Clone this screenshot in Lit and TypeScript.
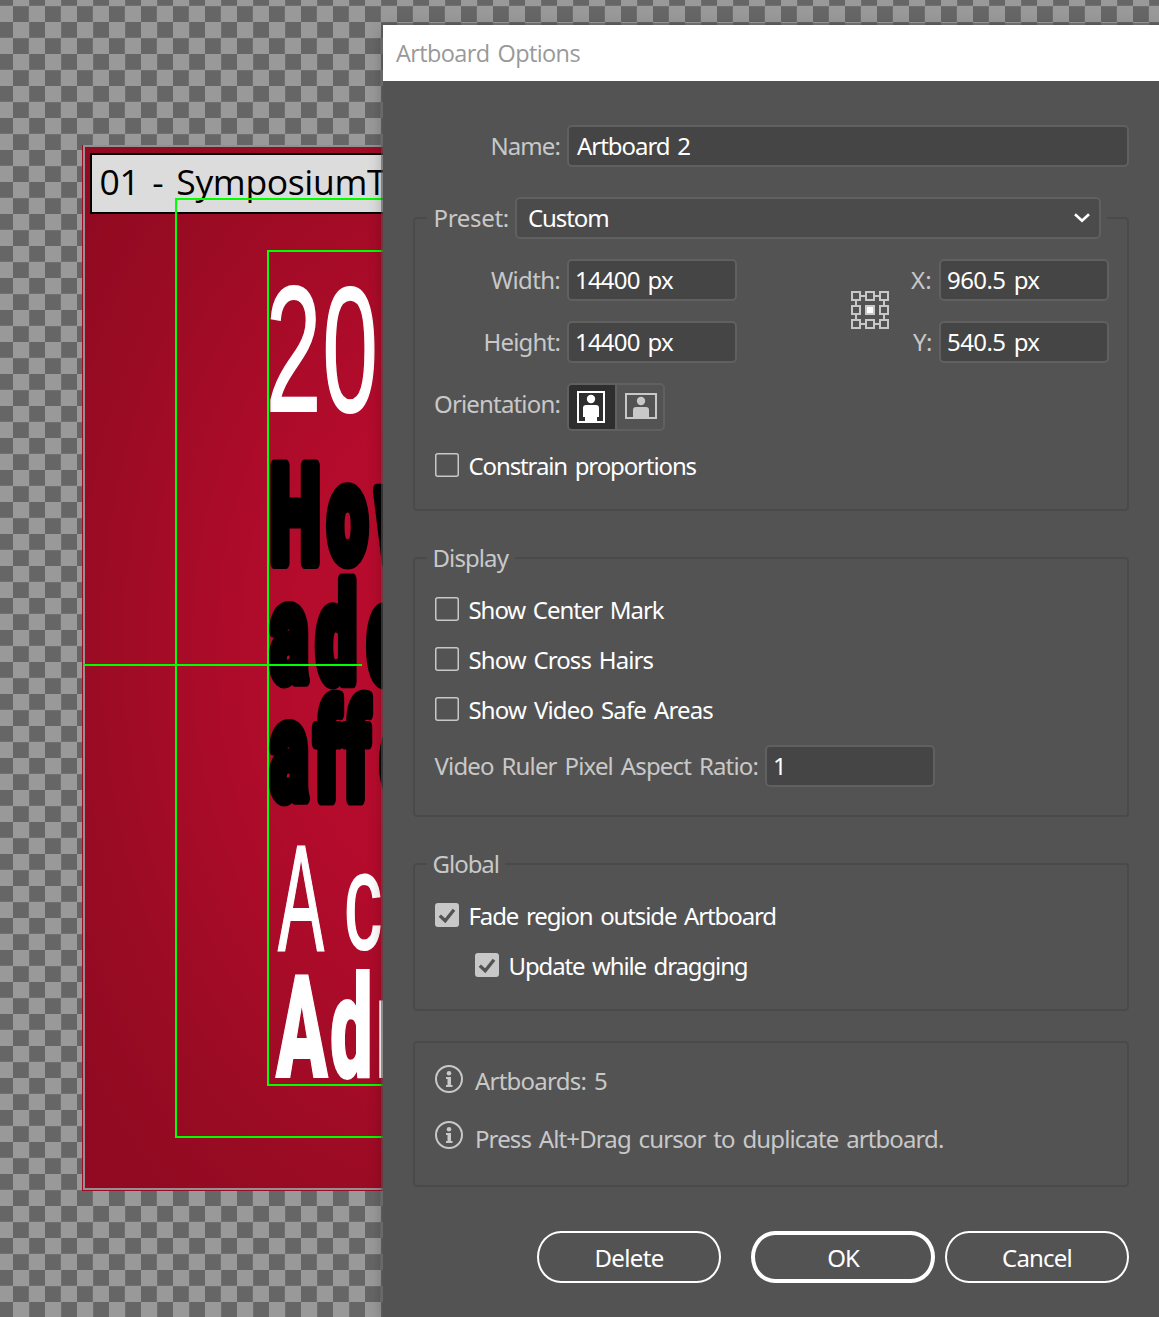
import { LitElement, html, svg, css } from "lit";
import { customElement, property } from "lit/decorators.js";

/** A single line of text, tracked so that it fills a given advance width. */
@customElement("fit-text")
class FitText extends LitElement {
  @property() text = "";
  @property({ type: Number }) w = 0;
  static styles = css`
    :host { display: inline-block; white-space: pre; flex: none; }
    .run { display: inline-block; word-spacing: 2.5px; }
  `;
  render() {
    return html`<span class="run">${this.text}</span>`;
  }
  updated() {
    const el = this.renderRoot.querySelector(".run") as HTMLElement;
    el.style.letterSpacing = "0px";
    const natural = el.getBoundingClientRect().width;
    if (this.w > 0) el.style.letterSpacing = `${(this.w - natural) / this.text.length}px`;
  }
}

@customElement("check-row")
class CheckRow extends LitElement {
  @property() text = "";
  @property({ type: Number }) w = 0;
  @property({ type: Boolean }) checked = false;
  static styles = css`
    :host { display: flex; align-items: center; height: 24px; gap: 9.5px; color: #fff; }
    svg { display: block; flex: none; }
    .label { margin-top: 2px; line-height: 30px; }
  `;
  render() {
    return html`
      <svg width="24" height="24" viewBox="0 0 24 24">
        ${this.checked
          ? svg`<rect width="24" height="24" rx="3" fill="#c8c8c8"/>
              <path d="M4.8 12.6 L10.2 17.8 L19 6.8" fill="none" stroke="#535353" stroke-width="3.4"/>`
          : svg`<rect x=".75" y=".75" width="22.5" height="22.5" rx="2" fill="none" stroke="#c8c8c8" stroke-width="1.5"/>`}
      </svg>
      <fit-text class="label" .text=${this.text} .w=${this.w}></fit-text>
    `;
  }
}

@customElement("art-canvas")
class ArtCanvas extends LitElement {
  static styles = css`
    :host { display: block; }
    svg { display: block; }
    .tag { font-family: "Open Sans", "Noto Sans", sans-serif; font-size: 35.5px; fill: #000; word-spacing: 4px; }
    .light { font-family: "Liberation Sans", sans-serif; fill: #fff; stroke: #fff; stroke-width: 2px; }
    .heavy { font-family: Roboto, "Liberation Sans", sans-serif; font-weight: 900; }
    .ink { font-size: 136px; fill: #000; stroke: #000; stroke-width: 13px; stroke-linejoin: round; }
    .white { font-size: 143px; fill: #fff; stroke: #fff; stroke-width: 2px; }
  `;
  render() {
    return html`
      <svg width="1159" height="1317" viewBox="0 0 1159 1317">
        <defs>
          <pattern id="checker" x="13" y="6" width="32" height="32" patternUnits="userSpaceOnUse">
            <rect width="32" height="32" fill="#999"/>
            <path d="M0 0h16v16h-16zM16 16h16v16h-16z" fill="#666"/>
            <path d="M0 0h16v1h-16zM15 0h1v16h-1zM16 31h16v1h-16zM16 16h1v16h-1z" fill="#707070"/>
          </pattern>
          <radialGradient id="red" gradientUnits="userSpaceOnUse" cx="0" cy="0" r="1"
            gradientTransform="translate(450 650) scale(450 700)">
            <stop offset="0" stop-color="#b90c2d"/>
            <stop offset=".35" stop-color="#b50b2c"/>
            <stop offset=".6" stop-color="#a70b28"/>
            <stop offset=".85" stop-color="#980b23"/>
            <stop offset="1" stop-color="#920a21"/>
          </radialGradient>
          <clipPath id="board"><rect x="82" y="145" width="301" height="1046"/></clipPath>
        </defs>
        <rect width="1159" height="1317" fill="url(#checker)"/>
        <g clip-path="url(#board)">
          <rect x="82" y="145" width="310" height="1046" fill="#9f0a25"/>
          <rect x="83" y="145" width="310" height="1045" fill="#919191"/>
          <rect x="85" y="147" width="310" height="1041" fill="url(#red)"/>
          <rect x="91" y="154" width="310" height="59" fill="#dcdcdc" stroke="#000" stroke-width="2"/>
          <text class="tag" x="99.5" y="195" textLength="287">01 - SymposiumT</text>

          <text class="light" font-size="179" transform="translate(266 411) scale(.555 1)" x="0 102">20</text>
          <text class="heavy ink" transform="translate(270 562) scale(.527 1)" x="0 109 200">How</text>
          <text class="heavy ink" transform="translate(270 681) scale(.527 1)" x="0 88 185">add</text>
          <text class="heavy ink" transform="translate(270 799) scale(.527 1)" x="0 85 140 209">affe</text>
          <text class="light" font-size="150" transform="translate(278 950) scale(.46 1)">A</text>
          <text class="light" font-size="138" transform="translate(344 949) scale(.55 1)">c</text>
          <text class="heavy white" transform="translate(276 1077) scale(.53 1)" x="0 102 189">Adr</text>
        </g>
        <g fill="none" stroke="#00ff00" stroke-width="2">
          <path d="M383 199H176V1137H383"/>
          <path d="M383 251H268V1085H383"/>
          <path d="M84 665H362"/>
        </g>
      </svg>
    `;
  }
}

@customElement("app-root")
class AppRoot extends LitElement {
  static styles = css`
    :host {
      display: block; position: relative; width: 1159px; height: 1317px; overflow: hidden;
      font-family: "Noto Sans", "Open Sans", sans-serif; font-size: 24px; color: #c8c8c8;
    }
    * { box-sizing: border-box; }
    svg { display: block; flex: none; }
    .dialog {
      position: absolute; left: 383px; top: 25px; width: 776px; height: 1292px;
      background: #535353;
      box-shadow: 0 0 0 2px rgba(85, 85, 85, .6), 0 4px 14px rgba(0, 0, 0, .28);
      display: flex; flex-direction: column;
    }
    .title { height: 56px; flex: none; background: #fff; color: #999; font-size: 23.5px;
      font-family: "Open Sans", "Noto Sans", sans-serif; padding-left: 13px; display: flex; align-items: center; }
    .body { padding: 44px 30px 0; display: flex; flex-direction: column; line-height: 30px; }
    .row { display: flex; align-items: center; }
    .field { height: 42px; border: 2px solid #606060; border-radius: 5px; background: #454545;
      color: #fff; display: flex; align-items: center; padding-left: 6px; }
    .name .field { flex: 1; padding-left: 8px; }
    .lab { display: flex; justify-content: flex-end; align-items: center; padding-right: 7px; }
    .name .lab { width: 154px; }
    .group { border: 2px solid #4a4a4a; border-radius: 4px; display: flex; flex-direction: column; }
    .preset { margin-top: 50px; height: 294px; }
    .head { margin: -22px 0 0 12px; width: 680px; height: 42px; background: #535353;
      display: flex; align-items: center; justify-content: space-between; padding: 0 6px 0 6.5px; }
    .select { width: 586px; height: 42px; border: 2px solid #606060; border-radius: 5px; background: #4b4b4b;
      color: #fff; display: flex; align-items: center; justify-content: space-between; padding: 0 8px 0 11px; }
    .dims { margin-top: 20px; display: grid; grid-template-columns: 152px 170px 114px 38px 50px 170px;
      grid-template-rows: 42px 42px; row-gap: 20px; }
    .pin { grid-column: 4; grid-row: 1 / 3; margin-top: 32px; }
    .xl { grid-column: 5; }
    .orient { margin-top: 20px; height: 48px; }
    .orient .lab { width: 152px; padding-bottom: 7px; }
    .seg { width: 98px; height: 48px; border: 2px solid #606060; border-radius: 5px; display: flex; overflow: hidden; }
    .seg .on { width: 46px; background: #2e2e2e; padding: 6px 0 0 8px; }
    .seg .off { flex: 1; border-left: 2px solid #606060; padding: 8px 0 0 8px; }
    .checks { display: flex; flex-direction: column; gap: 26px; margin-left: 20px; }
    .preset .checks { margin-top: 22px; }
    .display { margin-top: 46px; height: 260px; }
    .global { margin-top: 46px; height: 148px; }
    .legend { background: #535353; height: 30px; margin: -16px 0 0 12px; padding-left: 5.5px; align-self: flex-start; }
    .display .legend { width: 88px; }
    .global .legend { width: 78px; }
    .legend + .checks { margin-top: 24px; }
    .sub { margin-left: 40px; }
    .ratio { margin-top: 24px; }
    .ratio .lab { width: 350px; }
    .ratio .field { width: 170px; }
    .info { margin-top: 30px; height: 146px; padding: 22px 0 0 20px; }
    .note { display: flex; gap: 12px; height: 28px; }
    .note + .note { margin-top: 28px; }
    .note fit-text { margin-top: 1px; }
    .note + .note fit-text { margin-top: 3px; }
    .buttons { margin-top: 44px; display: flex; justify-content: flex-end; }
    .btn { width: 184px; height: 52px; border: 2px solid #fff; border-radius: 24px / 26px; color: #fff;
      display: flex; align-items: center; justify-content: center; padding-top: 2px; }
    .ok { border-width: 4px; margin: 0 10px 0 30px; }
  `;

  private t(text: string, w: number) {
    return html`<fit-text .text=${text} .w=${w}></fit-text>`;
  }

  private infoIcon() {
    return html`<svg width="28" height="28" viewBox="0 0 28 28">
      <circle cx="14" cy="14" r="13" fill="none" stroke="#c8c8c8" stroke-width="2"/>
      <circle cx="14" cy="8.3" r="2.3" fill="#c8c8c8"/>
      <path d="M11 12h5v8h1.5v2h-6.5v-2h1.5v-6h-1.5z" fill="#c8c8c8"/>
    </svg>`;
  }

  private pinIcon() {
    const at = [0, 14, 28];
    return html`<svg class="pin" width="38" height="38" viewBox="0 0 38 38">
      <path d="M10 5h4M24 5h4M10 33h4M24 33h4M5 10v4M5 24v4M33 10v4M33 24v4" stroke="#c8c8c8" stroke-width="2"/>
      ${at.map((y) => at.map((x) => svg`<rect x=${x + 1} y=${y + 1} width="8" height="8"
        fill=${x === 14 && y === 14 ? "#fff" : "none"} stroke="#c8c8c8" stroke-width="2"/>`))}
    </svg>`;
  }

  render() {
    return html`
      <art-canvas></art-canvas>
      <div class="dialog">
        <div class="title">${this.t("Artboard Options", 184)}</div>
        <div class="body">
          <div class="row name">
            <div class="lab">${this.t("Name:", 69.5)}</div>
            <div class="field">${this.t("Artboard 2", 113)}</div>
          </div>

          <div class="group preset">
            <div class="head">
              ${this.t("Preset:", 75.5)}
              <div class="select">
                ${this.t("Custom", 80.5)}
                <svg width="18" height="12" viewBox="0 0 18 12">
                  <path d="M2 2.2L9 8.8L16 2.2" fill="none" stroke="#fff" stroke-width="2.6"/>
                </svg>
              </div>
            </div>
            <div class="dims">
              <div class="lab">${this.t("Width:", 69)}</div>
              <div class="field">${this.t("14400 px", 98)}</div>
              ${this.pinIcon()}
              <div class="lab xl">${this.t("X:", 21)}</div>
              <div class="field">${this.t("960.5 px", 92.5)}</div>
              <div class="lab">${this.t("Height:", 76.5)}</div>
              <div class="field">${this.t("14400 px", 98)}</div>
              <div class="lab xl">${this.t("Y:", 19)}</div>
              <div class="field">${this.t("540.5 px", 92.5)}</div>
            </div>
            <div class="row orient">
              <div class="lab">${this.t("Orientation:", 126)}</div>
              <div class="seg">
                <div class="on">
                  <svg width="28" height="32" viewBox="0 0 28 32">
                    <rect x="1" y="1" width="26" height="30" fill="none" stroke="#fff" stroke-width="2"/>
                    <circle cx="14" cy="8" r="4.2" fill="#fff"/>
                    <path d="M9 14h10q3 0 3 3v9h-2v5h-12v-5h-2v-9q0-3 3-3z" fill="#fff"/>
                  </svg>
                </div>
                <div class="off">
                  <svg width="32" height="26" viewBox="0 0 32 26">
                    <rect x="1" y="1" width="30" height="24" fill="none" stroke="#c8c8c8" stroke-width="2"/>
                    <circle cx="16" cy="8" r="4.2" fill="#c8c8c8"/>
                    <path d="M8 25v-8q0-3 3-3h10q3 0 3 3v8z" fill="#c8c8c8"/>
                  </svg>
                </div>
              </div>
            </div>
            <div class="checks">
              <check-row text="Constrain proportions" w="227.5"></check-row>
            </div>
          </div>

          <div class="group display">
            <div class="legend">${this.t("Display", 75.5)}</div>
            <div class="checks">
              <check-row text="Show Center Mark" w="195"></check-row>
              <check-row text="Show Cross Hairs" w="184.5"></check-row>
              <check-row text="Show Video Safe Areas" w="244.5"></check-row>
            </div>
            <div class="row ratio">
              <div class="lab">${this.t("Video Ruler Pixel Aspect Ratio:", 323.5)}</div>
              <div class="field">${this.t("1", 14)}</div>
            </div>
          </div>

          <div class="group global">
            <div class="legend">${this.t("Global", 66.5)}</div>
            <div class="checks">
              <check-row checked text="Fade region outside Artboard" w="307.5"></check-row>
              <check-row class="sub" checked text="Update while dragging" w="239"></check-row>
            </div>
          </div>

          <div class="group info">
            <div class="note">${this.infoIcon()}${this.t("Artboards: 5", 132)}</div>
            <div class="note">${this.infoIcon()}${this.t("Press Alt+Drag cursor to duplicate artboard.", 468.5)}</div>
          </div>

          <div class="buttons">
            <div class="btn">${this.t("Delete", 69)}</div>
            <div class="btn ok">${this.t("OK", 31.5)}</div>
            <div class="btn">${this.t("Cancel", 70)}</div>
          </div>
        </div>
      </div>
    `;
  }
}
